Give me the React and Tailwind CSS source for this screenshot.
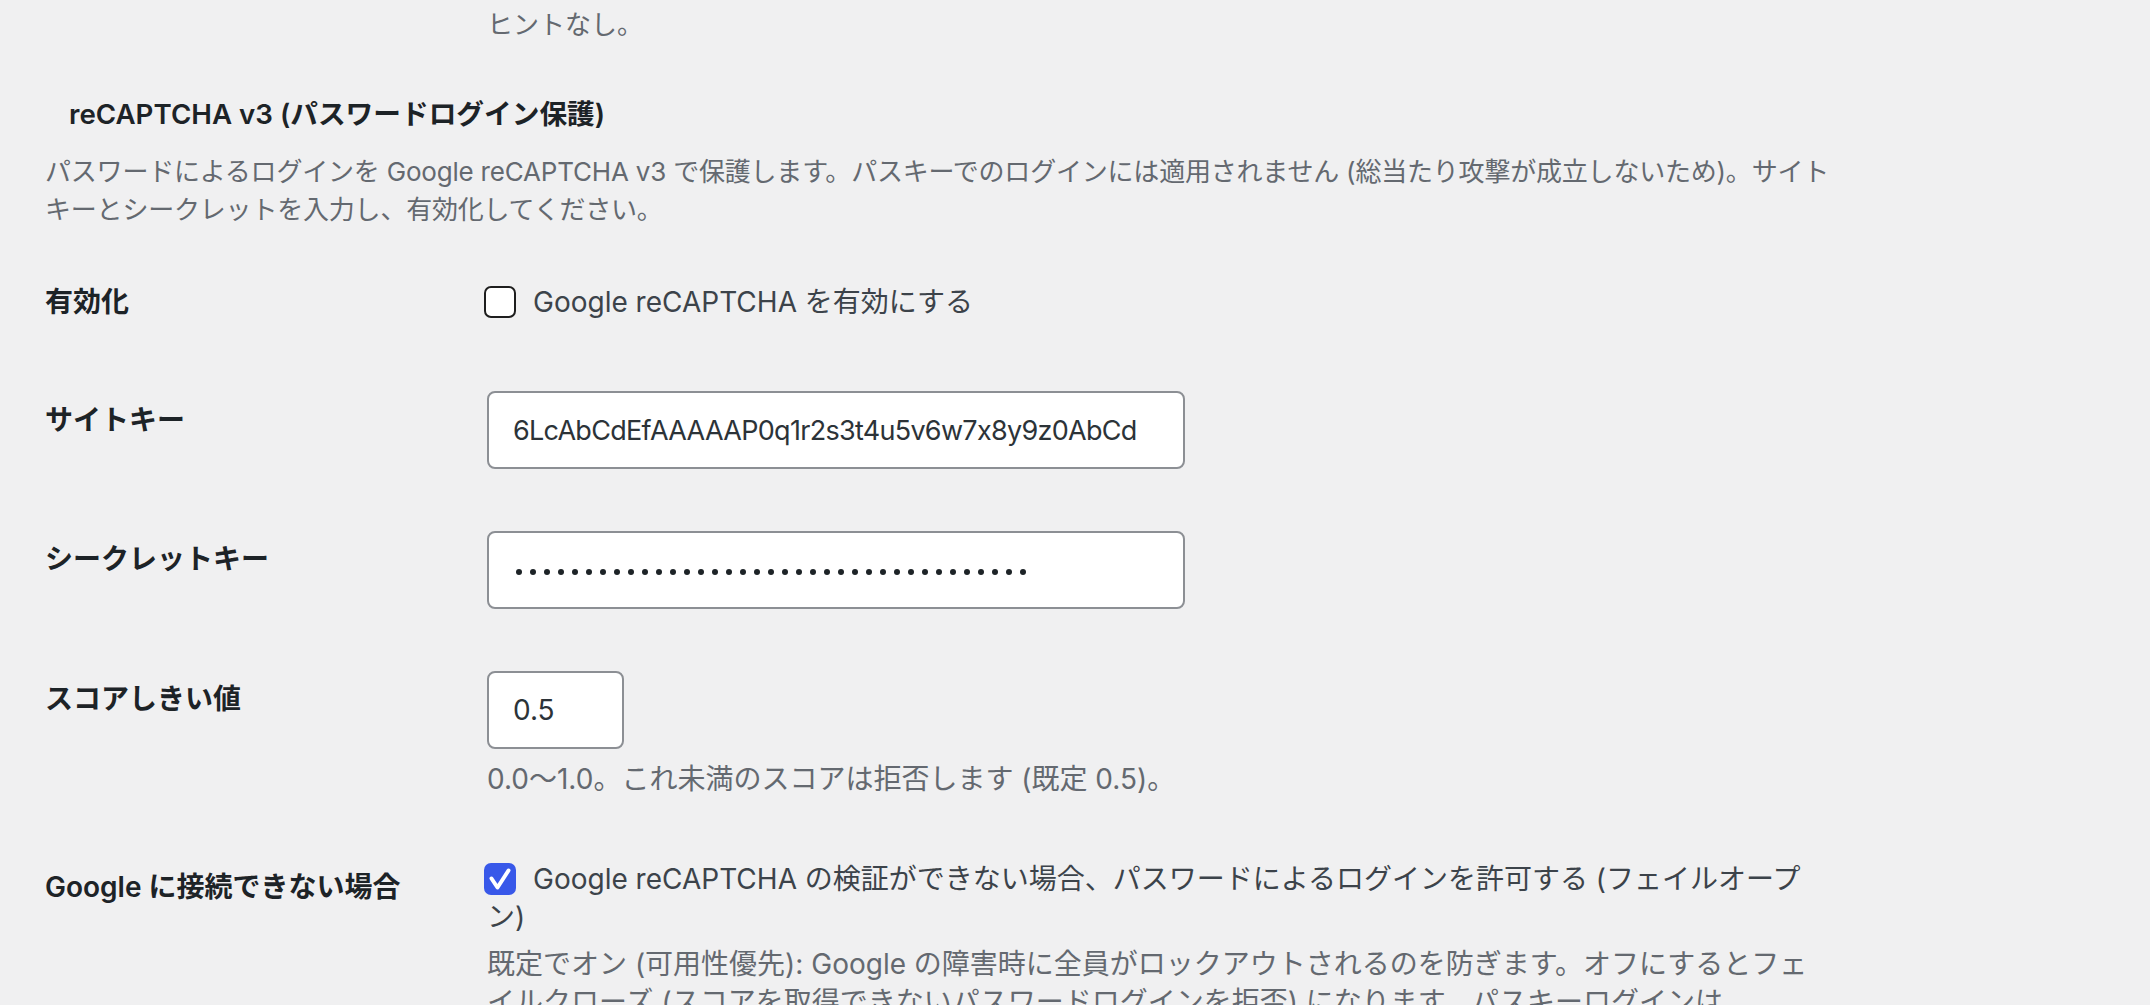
import React from "react";

const Checkbox = ({ checked }) =>
  checked ? (
    <span className="flex h-[32px] w-[32px] shrink-0 items-center justify-center rounded-[7px] bg-[#3858e9]">
      <svg viewBox="0 0 32 32" className="h-[32px] w-[32px]">
        <path d="M7.5 15.5 L13.5 24.5 L24.5 7.5" fill="none" stroke="#fff" strokeWidth="4" strokeLinecap="round" strokeLinejoin="round" />
      </svg>
    </span>
  ) : (
    <span className="block h-[32px] w-[32px] shrink-0 rounded-[7px] border-2 border-[#1e1e1e] bg-white" />
  );

const Label = ({ children }) => (
  <div className="w-[442px] shrink-0 pt-[41px] text-[28px] font-semibold leading-[36px] text-[#1d2327]">
    {children}
  </div>
);

const App = () => {
  const dots = Array.from({ length: 37 });

  return (
    <div className="min-h-screen overflow-hidden bg-[#f0f0f1] font-[Inter,'Noto_Sans_CJK_JP',sans-serif] [font-feature-settings:'calt'_0]">
      <div className="w-[1830px] pl-[45px]">
        {/* tail of previous field */}
        <div className="flex">
          <div className="w-[442px] shrink-0" />
          <p className="pt-[6px] text-[26px] leading-[38px] text-[#646970]">ヒントなし。</p>
        </div>

        {/* Section heading */}
        <h3 className="mt-[52px] pl-[24px] text-[27.7px] font-semibold leading-[36px] text-[#1d2327]">
          reCAPTCHA v3 (パスワードログイン保護)
        </h3>
        <p className="mt-[21px] whitespace-nowrap text-[26px] leading-[38px] tracking-[-0.2px] text-[#646970]">
          パスワードによるログインを Google reCAPTCHA v3 で保護します。パスキーでのログインには適用されません (総当たり攻撃が成立しないため)。サイト
          <br />
          キーとシークレットを入力し、有効化してください。
        </p>

        {/* 有効化 */}
        <div className="mt-[14px] flex">
          <Label>有効化</Label>
          <div className="-ml-[3px] pt-[40px] pb-[40px]">
            <div className="flex items-start gap-[17px] text-[28px] leading-[38px] text-[#3c434a]">
              <span className="mt-[3px]">
                <Checkbox checked={false} />
              </span>
              <span>Google reCAPTCHA を有効にする</span>
            </div>
          </div>
        </div>

        {/* サイトキー */}
        <div className="flex">
          <Label>サイトキー</Label>
          <div className="pt-[30px] pb-[31px]">
            <input
              type="text"
              readOnly
              value="6LcAbCdEfAAAAAP0q1r2s3t4u5v6w7x8y9z0AbCd"
              className="h-[78px] w-[698px] rounded-[8px] border-2 border-[#8c8f94] bg-white px-[24px] text-[27px] tracking-[-0.7px] text-[#2c3338] outline-none [font-feature-settings:'calt'_0]"
            />
          </div>
        </div>

        {/* シークレットキー */}
        <div className="flex">
          <Label>シークレットキー</Label>
          <div className="pt-[31px] pb-[31px]">
            <div className="flex h-[78px] w-[698px] items-center gap-[8px] rounded-[8px] border-2 border-[#8c8f94] bg-white px-[27px] pt-[3px]">
              {dots.map((_, i) => (
                <span key={i} className="block h-[6px] w-[6px] rounded-full bg-[#1d2327]" />
              ))}
            </div>
          </div>
        </div>

        {/* スコアしきい値 */}
        <div className="flex">
          <Label>スコアしきい値</Label>
          <div className="pt-[31px] pb-[30px]">
            <input
              type="text"
              readOnly
              value="0.5"
              className="h-[78px] w-[137px] rounded-[8px] border-2 border-[#8c8f94] bg-white px-[24px] text-[28px] text-[#2c3338] outline-none"
            />
            <p className="mt-[11px] whitespace-nowrap text-[28px] leading-[38px] text-[#646970]">
              0.0〜1.0。これ未満のスコアは拒否します (既定 0.5)。
            </p>
          </div>
        </div>

        {/* Google に接続できない場合 */}
        <div className="flex">
          <Label>Google に接続できない場合</Label>
          <div className="pt-[32px]">
            <div className="text-[28px] leading-[38px] text-[#3c434a]">
              <div className="-ml-[3px] flex items-start gap-[17px] whitespace-nowrap">
                <span className="mt-[3px]">
                  <Checkbox checked />
                </span>
                <span>Google reCAPTCHA の検証ができない場合、パスワードによるログインを許可する (フェイルオープ</span>
              </div>
              <div>ン)</div>
            </div>
            <p className="mt-[9px] whitespace-nowrap text-[28px] leading-[38px] text-[#646970]">
              既定でオン (可用性優先): Google の障害時に全員がロックアウトされるのを防ぎます。オフにするとフェ
              <br />
              イルクローズ (スコアを取得できないパスワードログインを拒否) になります。パスキーログインは
            </p>
          </div>
        </div>
      </div>
    </div>
  );
};

export default App;
